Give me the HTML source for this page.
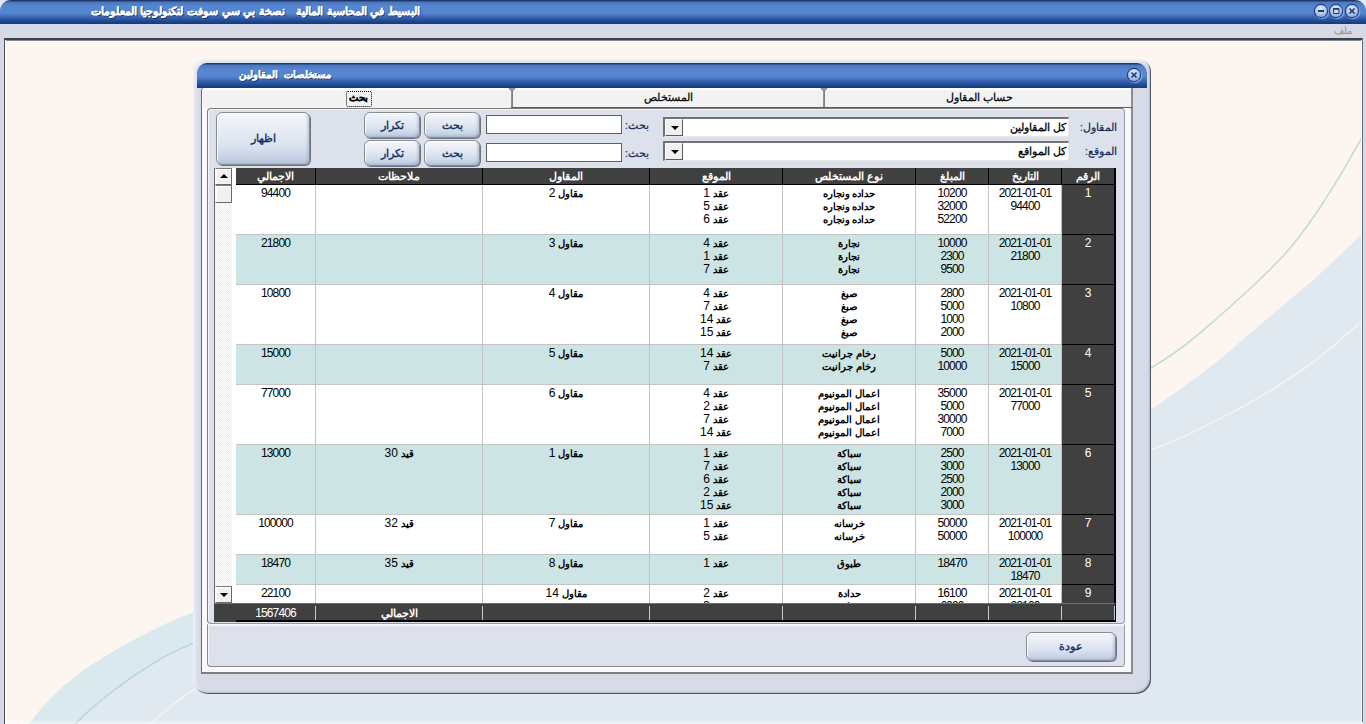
<!DOCTYPE html>
<html lang="ar">
<head>
<meta charset="utf-8">
<title>مستخلصات المقاولين</title>
<style>
*{box-sizing:border-box;margin:0;padding:0}
html,body{width:1366px;height:724px;overflow:hidden}
body{position:relative;background:#fdf6f0;font-family:"Liberation Sans",sans-serif;font-size:11px;color:#000}
#bg{position:absolute;left:0;top:0;width:1366px;height:724px}
/* main window chrome */
#mtitle{position:absolute;left:0;top:0;width:1366px;height:24px;border-radius:11px 11px 0 0;
 background:linear-gradient(#1b2d5e 0,#29457f 1.2px,#4a78be 2px,#4f7ec6 4px,#5686cf 6px,#5585ce 13px,#4a78c2 15px,#3a66b0 17px,#2c57a2 19px,#1f4a92 21px,#173f80 23px,#143a78 24px)}
#mtitle .t{position:absolute;right:946px;top:3px;height:16px;line-height:16px;color:#fff;font-weight:bold;font-size:11px;word-spacing:.6px;-webkit-text-stroke:.3px #fff;white-space:nowrap;direction:rtl;text-shadow:1px 1px 0 #1c2f66}
#menubar{position:absolute;left:0;top:24px;width:1366px;height:14px;background:#d6dae6}
#menubar .m{position:absolute;right:14px;top:0;height:13px;line-height:13px;font-size:10px;color:#9a917f;direction:rtl}
#mline{position:absolute;left:4px;top:38px;width:1358px;height:2px;background:#3c4150}
#mline2{position:absolute;left:5px;top:40px;width:1357px;height:2px;background:linear-gradient(#868a94 0,#868a94 1px,#fff 1px,#fff 2px)}
#lframe{position:absolute;left:0;top:24px;width:4px;height:700px;background:#d4d8e8}
#lline{position:absolute;left:4px;top:38px;width:1px;height:686px;background:#4a4e5a}
#lwhite{position:absolute;left:5px;top:40px;width:1px;height:684px;background:#fff}
#rframe{position:absolute;left:1363px;top:24px;width:3px;height:700px;background:#d4d8e8}
#rline{position:absolute;left:1362px;top:38px;width:1px;height:684px;background:#6a6e7a}
#rwhite{position:absolute;left:1361px;top:40px;width:1px;height:684px;background:#fff}
#bline{position:absolute;left:5px;top:721px;width:1356px;height:3px;background:rgba(255,255,255,.35)}
.wbtn{position:absolute;top:5px;width:12px;height:12px;border-radius:50%;
 background:radial-gradient(circle at 45% 30%,#e2ebf9 0,#b2c7e9 50%,#7494ce 100%);box-shadow:0 0 0 1.2px #1f3b7c,1px 1px 1px 1.2px rgba(190,212,248,.6)}
.wbtn svg{position:absolute;left:-1px;top:-1px;width:14px;height:14px}
/* dialog */
#dlg{position:absolute;left:193px;top:59px;width:958px;height:635px;border-radius:13px 13px 15px 15px;background:#d7dbe8;
 box-shadow:inset 1px 1px 0 #eef0f6,inset -1px -1px 0 #4f5868,inset 3px 3px 3px #e9ebf3,inset -2px -2px 2px #b4b9c8}
#dtitle{position:absolute;left:4px;top:4px;width:950px;height:25px;border-radius:10px 10px 0 0;
 background:linear-gradient(#1b2d5e 0,#29457f 1.2px,#4a78be 2px,#4f7ec6 4px,#5686cf 6px,#5585ce 13.5px,#4a78c2 15.5px,#3a66b0 17.5px,#2c57a2 20px,#1f4a92 22px,#173f80 24px,#143a78 25px)}
#dtitle .t{position:absolute;right:816px;top:3px;height:17px;line-height:17px;color:#fff;font-weight:bold;font-size:10.4px;word-spacing:3px;-webkit-text-stroke:.3px #fff;white-space:nowrap;direction:rtl;text-shadow:1px 1px 0 #1c2f66}
#dtitle .wbtn{top:6px;left:931px}
#tabpage{position:absolute;left:8px;top:29px;width:932px;height:586px;background:#f2f2f2;border-right:2px solid #8c8c8c;border-bottom:2px solid #808080;border-left:1px solid #686868;border-radius:3px 0 0 0;box-shadow:inset 1px 2px 0 #fff}
.tab{position:absolute;top:0;height:19px;line-height:19px;text-align:center;font-size:11px;direction:rtl;white-space:nowrap;-webkit-text-stroke:.25px #000}
.tabsep{position:absolute;top:0;width:2px;height:20px;background:linear-gradient(90deg,#9a9a9a,#787878)}
.tabline{position:absolute;top:19px;height:1px;background:#5a5a5a}
#focus{position:absolute;left:144px;top:3px;width:26px;height:16px;border:1px dotted #000;border-radius:2px}
#spanel{position:absolute;left:5px;top:20px;width:918px;height:516px;background:#dde1eb;border:1px solid #7c7c7c;border-right-color:#9698a4;border-bottom-color:#9698a4;border-radius:4px;box-shadow:inset 1px 1px 0 #f4f5f9,-5px 0 0 #fafafc,6px 0 0 #fafafc}
#spanel2{position:absolute;left:5px;top:536px;width:918px;height:43px;background:#dde1eb;border:1px solid #8a8a8a;border-top-color:#f6f6f8;border-right-color:#9698a4;border-radius:0 0 4px 4px;box-shadow:inset 1px 1px 0 #f4f5f9,-5px 0 0 #fafafc,6px 0 0 #fafafc,0 5px 0 #fafafc,-5px 5px 0 #fafafc,6px 5px 0 #fafafc}
.btn{position:absolute;border:1px solid #868b96;border-radius:6px;text-align:center;color:#15295c;font-size:10.5px;direction:rtl;-webkit-text-stroke:.35px #15295c;
 background:linear-gradient(#f4f7fb 0,#e8edf5 30%,#dae3ef 62%,#c6d3e5 88%,#b6c5db 100%);box-shadow:1px 1px 0 #6d727e,inset 1px 1px 0 #fff,inset -2px -1px 2px rgba(150,170,200,.45)}
.inp{position:absolute;background:#fff;border:1px solid #5f5f5f}
.lbl{position:absolute;color:#15295c;font-size:10.5px;direction:rtl;white-space:nowrap;text-align:right;-webkit-text-stroke:.2px #15295c}
.combo{position:absolute;background:#fff;border-top:2px solid #727272;border-left:2px solid #727272;border-bottom:1px solid #e8e8e8;border-right:1px solid #e8e8e8}
.combo .dd{position:absolute;left:0;top:0;width:18px;height:17px;background:#f0f0f0;border:1px solid;border-color:#fff #5a5a5a #5a5a5a #fff}
.combo .dd:after{content:"";position:absolute;left:5px;top:6px;border:4px solid transparent;border-top:4px solid #000;border-bottom:0}
.combo .v{position:absolute;right:2px;top:0;height:17px;line-height:17px;font-size:10.8px;direction:rtl;white-space:nowrap;-webkit-text-stroke:.3px #000}
/* table */
#tbl{position:absolute;left:214px;top:168px;width:902px;height:435px;background:#fff;overflow:hidden}
.c{position:absolute;text-align:center;line-height:13px;white-space:nowrap;overflow:hidden}
.c.h{background:#404040;color:#fff;font-weight:bold;font-size:10.5px;line-height:16px;border-right:1px solid #000;direction:rtl}
.c.n{background:#404040;color:#fff;border-bottom:1px solid #000;border-right:2px solid #000;padding-top:2px;font-size:12px}
.c.d{border-right:1px solid #c4c4c4;border-bottom:1px solid #c4c4c4;padding-top:2px}
.c.ar{direction:rtl;font-size:9.8px;font-weight:bold;padding-top:2px}
.c.ar b{font-weight:normal;font-size:12px;letter-spacing:-.9px;line-height:0}
.rowbg{position:absolute;left:22px;width:826px;background:#fff}
.rowbg.alt{background:#cce4e4}
#hline{position:absolute;left:22px;top:16px;width:880px;height:1px;background:#000}
#sb{position:absolute;left:0;top:0;width:18px;height:435px;border-left:1px solid #6a6a6a;background:#f7f7f7;background-image:repeating-conic-gradient(#fff 0 25%,#ececec 0 50%);background-size:2px 2px}
.sbb{position:absolute;left:0;width:17px;height:17px;background:#f0f0f0;border:1px solid;border-color:#7a7a7a #6a6a6a #6a6a6a #fff;box-shadow:inset 1px 1px 0 #fff}
.sbb i{position:absolute;left:4px;top:5px;border:4px solid transparent}
.sbb i.up{border-bottom:4px solid #000;border-top:0}
.sbb i.dn{border-top:4px solid #000;border-bottom:0;top:6px}
#totrow{position:absolute;left:214px;top:603px;width:902px;height:19px;background:#404040;border-top:1px solid #6e6e6e;border-right:1px solid #000}
.tc{position:absolute;top:2px;height:15px;line-height:15px;color:#fff;text-align:center;border-right:1px solid #c8c8c8;white-space:nowrap}
.tc.b{font-weight:bold;direction:rtl;font-size:10.5px}
#totline{position:absolute;left:22px;top:16px;width:880px;height:2px;background:#000}
.num{font-size:12px;letter-spacing:-.9px}
.c.d.num{padding-top:2px}
.tabv{position:absolute;top:0;width:0;height:0;border-left:4px solid transparent;border-right:4px solid transparent;border-top:4px solid #8d93ad}
.c.h.hl{border-right:2px solid #000}

</style>
</head>
<body>
<svg id="bg" viewBox="0 0 1366 724">
 <rect width="1366" height="724" fill="#fdf6f0"/>
 <rect width="1366" height="24" fill="#e6e8f0"/>
 <path d="M24.0,731.0 C25.1,729.5 26.8,727.0 30.5,722.3 C34.2,717.6 40.6,709.1 46.3,702.9 C52.0,696.7 58.6,690.7 64.8,685.3 C71.0,679.9 77.1,675.0 83.3,670.5 C89.5,666.0 95.6,662.4 101.8,658.5 C108.0,654.6 114.1,650.9 120.3,647.4 C126.5,643.9 132.6,640.5 138.8,637.2 C145.0,634.0 151.1,630.8 157.3,627.9 C163.5,625.0 170.0,622.1 175.8,619.6 C181.7,617.1 183.4,616.4 192.4,613.1 C201.4,609.8 223.7,602.2 230.0,600.0 L1120,428 C1125.2,424.9 1140.9,415.8 1151.0,409.3 C1161.1,402.8 1169.8,396.7 1180.5,389.0 C1191.2,381.3 1203.5,372.2 1215.0,363.0 C1226.5,353.8 1238.1,343.7 1249.6,334.0 C1261.1,324.3 1272.5,314.4 1284.0,304.6 C1295.5,294.8 1307.2,285.4 1318.7,275.0 C1330.2,264.6 1346.0,249.3 1353.0,242.5 C1360.0,235.7 1358.2,236.9 1361.0,234.0 C1363.8,231.1 1368.5,226.5 1370.0,225.0 L1370,731 L24,731 Z" fill="#e0e9f0"/>
 <path d="M24.0,731.0 C25.1,729.5 26.8,727.0 30.5,722.3 C34.2,717.6 40.6,709.1 46.3,702.9 C52.0,696.7 58.6,690.7 64.8,685.3 C71.0,679.9 77.1,675.0 83.3,670.5 C89.5,666.0 95.6,662.4 101.8,658.5 C108.0,654.6 114.1,650.9 120.3,647.4 C126.5,643.9 132.6,640.5 138.8,637.2 C145.0,634.0 151.1,630.8 157.3,627.9 C163.5,625.0 170.0,622.1 175.8,619.6 C181.7,617.1 183.4,616.4 192.4,613.1 C201.4,609.8 223.7,602.2 230.0,600.0 L230,628 C223.7,630.6 203.0,639.1 192.4,643.7 C181.8,648.3 173.9,651.9 166.5,655.7 C159.1,659.6 154.2,662.9 148.0,666.8 C141.8,670.6 135.7,674.5 129.5,678.8 C123.3,683.1 117.2,687.9 111.0,692.7 C104.8,697.5 98.2,702.6 92.5,707.5 C86.8,712.4 80.5,718.7 76.8,722.3 C73.0,725.9 71.1,727.9 70.0,729.0 Z" fill="#d9e9ee"/>
 <path d="M70.0,729.0 C71.1,727.9 73.0,725.9 76.8,722.3 C80.5,718.7 86.8,712.4 92.5,707.5 C98.2,702.6 104.8,697.5 111.0,692.7 C117.2,687.9 123.3,683.1 129.5,678.8 C135.7,674.5 141.8,670.6 148.0,666.8 C154.2,662.9 159.1,659.6 166.5,655.7 C173.9,651.9 181.8,648.3 192.4,643.7 C203.0,639.1 223.7,630.6 230.0,628.0" fill="none" stroke="#bad3d9" stroke-width="1.4"/>
 <path d="M146.0,727.0 C146.9,726.2 148.3,725.1 151.7,722.3 C155.1,719.5 160.9,714.8 166.5,710.3 C172.1,705.8 180.7,698.8 185.0,695.5 C189.3,692.2 184.9,695.4 192.4,690.8 C199.9,686.2 223.7,671.8 230.0,668.0" fill="none" stroke="#eef5f8" stroke-width="1.6"/>
 <path d="M1120.0,387.0 C1125.2,383.8 1140.9,374.4 1151.0,368.0 C1161.1,361.6 1169.8,356.5 1180.5,348.5 C1191.2,340.5 1203.5,329.9 1215.0,320.0 C1226.5,310.1 1238.5,299.4 1249.6,289.0 C1260.7,278.6 1273.3,266.5 1281.5,257.8 C1289.7,249.1 1292.4,245.6 1299.0,237.0 C1305.6,228.4 1313.7,217.1 1321.0,206.0 C1328.3,194.9 1336.5,181.5 1343.0,170.6 C1349.5,159.7 1356.2,147.6 1360.0,140.8 C1363.8,134.0 1365.0,131.8 1366.0,130.0" fill="none" stroke="#c3dccf" stroke-width="1.6"/>
 <path d="M1120.0,461.0 C1125.2,459.1 1140.9,453.5 1151.0,449.7 C1161.1,445.9 1169.8,442.8 1180.5,438.0 C1191.2,433.2 1203.5,426.8 1215.0,421.0 C1226.5,415.2 1238.1,409.5 1249.6,403.0 C1261.1,396.5 1272.5,389.5 1284.0,382.0 C1295.5,374.5 1307.2,366.9 1318.7,358.0 C1330.2,349.1 1346.0,334.8 1353.0,328.8 C1360.0,322.8 1358.2,324.5 1361.0,322.0 C1363.8,319.5 1368.5,315.3 1370.0,314.0" fill="none" stroke="#eff5f8" stroke-width="1.6"/>
</svg>
<div id="mtitle"><div class="t">البسيط في المحاسبة المالية&nbsp;&nbsp; نصخة بي سي سوفت لتكنولوجيا المعلومات</div>
 <div class="wbtn" style="left:1315px"><svg viewBox="0 0 14 14"><path d="M4 7h6" stroke="#1f3a7a" stroke-width="2"/></svg></div>
 <div class="wbtn" style="left:1330px"><svg viewBox="0 0 14 14"><path d="M4.5 4.5h5.5v5h-5.5z" fill="none" stroke="#1f3a7a" stroke-width="1"/><path d="M4.5 5h5.5" stroke="#1f3a7a" stroke-width="1.6"/></svg></div>
 <div class="wbtn" style="left:1346px"><svg viewBox="0 0 14 14"><path d="M4.5 4.5l5 5M9.5 4.5l-5 5" stroke="#1f3a7a" stroke-width="1.7"/></svg></div>
</div>
<div id="menubar"><div class="m">ملف</div></div>
<div id="lframe"></div><div id="rframe"></div>
<div id="mline"></div><div id="mline2"></div><div id="lline"></div><div id="lwhite"></div><div id="rline"></div><div id="rwhite"></div>
<div id="bline"></div>
<div id="dlg">
 <div id="dtitle"><div class="t">مستخلصات المقاولين</div>
  <div class="wbtn"><svg viewBox="0 0 14 14"><path d="M4.5 4.5l5 5M9.5 4.5l-5 5" stroke="#1f3a7a" stroke-width="1.7"/></svg></div>
 </div>
 <div id="tabpage">
  <div class="tab" style="left:0;width:313px;font-weight:bold;font-size:10px">بحث</div>
  <div id="focus"></div>
  <div class="tab" style="left:311px;width:310px">المستخلص</div>
  <div class="tab" style="left:623px;width:309px">حساب المقاول</div>
  <div class="tabsep" style="left:309px"></div><div class="tabsep" style="left:621px"></div><div class="tabv" style="left:306px"></div><div class="tabv" style="left:618px"></div>
  <div class="tabline" style="left:309px;width:621px"></div>
  <div id="spanel"></div><div id="spanel2"></div>
 </div>
</div>
<div class="btn" style="left:216px;top:112px;width:94px;height:53px;line-height:51px">اظهار</div>
<div class="btn" style="left:364px;top:112px;width:56px;height:26px;line-height:24px">تكرار</div>
<div class="btn" style="left:424px;top:112px;width:56px;height:26px;line-height:24px">بحث</div>
<div class="btn" style="left:364px;top:140px;width:56px;height:26px;line-height:24px">تكرار</div>
<div class="btn" style="left:424px;top:140px;width:56px;height:26px;line-height:24px">بحث</div>
<div class="inp" style="left:486px;top:115px;width:136px;height:19px"></div>
<div class="inp" style="left:486px;top:143px;width:136px;height:19px"></div>
<div class="lbl" style="left:621px;top:118px;width:28px;height:14px;line-height:14px">بحث:</div>
<div class="lbl" style="left:621px;top:146px;width:28px;height:14px;line-height:14px">بحث:</div>
<div class="combo" style="left:663px;top:117px;width:406px;height:20px"><div class="dd"></div><div class="v">كل المقاولين</div></div>
<div class="combo" style="left:663px;top:141px;width:406px;height:20px"><div class="dd"></div><div class="v">كل المواقع</div></div>
<div class="lbl" style="left:1070px;top:120px;width:47px;height:15px;line-height:15px">المقاول:</div>
<div class="lbl" style="left:1070px;top:144px;width:47px;height:15px;line-height:15px">الموقع:</div>
<div id="tbl">
<div class="c h hl" style="left:848px;top:0px;width:54px;height:16px"><span>الرقم</span></div>
<div class="c h" style="left:775px;top:0px;width:73px;height:16px"><span>التاريخ</span></div>
<div class="c h" style="left:702px;top:0px;width:73px;height:16px"><span>المبلغ</span></div>
<div class="c h" style="left:569px;top:0px;width:133px;height:16px"><span>نوع المستخلص</span></div>
<div class="c h" style="left:436px;top:0px;width:133px;height:16px"><span>الموقع</span></div>
<div class="c h" style="left:269px;top:0px;width:167px;height:16px"><span>المقاول</span></div>
<div class="c h" style="left:102px;top:0px;width:167px;height:16px"><span>ملاحظات</span></div>
<div class="c h" style="left:22px;top:0px;width:80px;height:16px"><span>الاجمالي</span></div>
<div class="rowbg" style="top:17px;height:50px"></div>
<div class="c n" style="left:848px;top:17px;width:54px;height:50px">1</div>
<div class="c d num" style="left:775px;top:17px;width:73px;height:50px">2021-01-01<br>94400</div>
<div class="c d num" style="left:702px;top:17px;width:73px;height:50px">10200<br>32000<br>52200</div>
<div class="c d ar" style="left:569px;top:17px;width:133px;height:50px">حداده ونجاره<br>حداده ونجاره<br>حداده ونجاره</div>
<div class="c d ar" style="left:436px;top:17px;width:133px;height:50px">عقد <b>1</b><br>عقد <b>5</b><br>عقد <b>6</b></div>
<div class="c d ar" style="left:269px;top:17px;width:167px;height:50px">مقاول <b>2</b></div>
<div class="c d ar" style="left:102px;top:17px;width:167px;height:50px"></div>
<div class="c d num" style="left:22px;top:17px;width:80px;height:50px">94400</div>
<div class="rowbg alt" style="top:67px;height:50px"></div>
<div class="c n" style="left:848px;top:67px;width:54px;height:50px">2</div>
<div class="c d num" style="left:775px;top:67px;width:73px;height:50px">2021-01-01<br>21800</div>
<div class="c d num" style="left:702px;top:67px;width:73px;height:50px">10000<br>2300<br>9500</div>
<div class="c d ar" style="left:569px;top:67px;width:133px;height:50px">نجارة<br>نجارة<br>نجارة</div>
<div class="c d ar" style="left:436px;top:67px;width:133px;height:50px">عقد <b>4</b><br>عقد <b>1</b><br>عقد <b>7</b></div>
<div class="c d ar" style="left:269px;top:67px;width:167px;height:50px">مقاول <b>3</b></div>
<div class="c d ar" style="left:102px;top:67px;width:167px;height:50px"></div>
<div class="c d num" style="left:22px;top:67px;width:80px;height:50px">21800</div>
<div class="rowbg" style="top:117px;height:60px"></div>
<div class="c n" style="left:848px;top:117px;width:54px;height:60px">3</div>
<div class="c d num" style="left:775px;top:117px;width:73px;height:60px">2021-01-01<br>10800</div>
<div class="c d num" style="left:702px;top:117px;width:73px;height:60px">2800<br>5000<br>1000<br>2000</div>
<div class="c d ar" style="left:569px;top:117px;width:133px;height:60px">صبغ<br>صبغ<br>صبغ<br>صبغ</div>
<div class="c d ar" style="left:436px;top:117px;width:133px;height:60px">عقد <b>4</b><br>عقد <b>7</b><br>عقد <b>14</b><br>عقد <b>15</b></div>
<div class="c d ar" style="left:269px;top:117px;width:167px;height:60px">مقاول <b>4</b></div>
<div class="c d ar" style="left:102px;top:117px;width:167px;height:60px"></div>
<div class="c d num" style="left:22px;top:117px;width:80px;height:60px">10800</div>
<div class="rowbg alt" style="top:177px;height:40px"></div>
<div class="c n" style="left:848px;top:177px;width:54px;height:40px">4</div>
<div class="c d num" style="left:775px;top:177px;width:73px;height:40px">2021-01-01<br>15000</div>
<div class="c d num" style="left:702px;top:177px;width:73px;height:40px">5000<br>10000</div>
<div class="c d ar" style="left:569px;top:177px;width:133px;height:40px">رخام جرانيت<br>رخام جرانيت</div>
<div class="c d ar" style="left:436px;top:177px;width:133px;height:40px">عقد <b>14</b><br>عقد <b>7</b></div>
<div class="c d ar" style="left:269px;top:177px;width:167px;height:40px">مقاول <b>5</b></div>
<div class="c d ar" style="left:102px;top:177px;width:167px;height:40px"></div>
<div class="c d num" style="left:22px;top:177px;width:80px;height:40px">15000</div>
<div class="rowbg" style="top:217px;height:60px"></div>
<div class="c n" style="left:848px;top:217px;width:54px;height:60px">5</div>
<div class="c d num" style="left:775px;top:217px;width:73px;height:60px">2021-01-01<br>77000</div>
<div class="c d num" style="left:702px;top:217px;width:73px;height:60px">35000<br>5000<br>30000<br>7000</div>
<div class="c d ar" style="left:569px;top:217px;width:133px;height:60px">اعمال المونيوم<br>اعمال المونيوم<br>اعمال المونيوم<br>اعمال المونيوم</div>
<div class="c d ar" style="left:436px;top:217px;width:133px;height:60px">عقد <b>4</b><br>عقد <b>2</b><br>عقد <b>7</b><br>عقد <b>14</b></div>
<div class="c d ar" style="left:269px;top:217px;width:167px;height:60px">مقاول <b>6</b></div>
<div class="c d ar" style="left:102px;top:217px;width:167px;height:60px"></div>
<div class="c d num" style="left:22px;top:217px;width:80px;height:60px">77000</div>
<div class="rowbg alt" style="top:277px;height:70px"></div>
<div class="c n" style="left:848px;top:277px;width:54px;height:70px">6</div>
<div class="c d num" style="left:775px;top:277px;width:73px;height:70px">2021-01-01<br>13000</div>
<div class="c d num" style="left:702px;top:277px;width:73px;height:70px">2500<br>3000<br>2500<br>2000<br>3000</div>
<div class="c d ar" style="left:569px;top:277px;width:133px;height:70px">سباكة<br>سباكة<br>سباكة<br>سباكة<br>سباكة</div>
<div class="c d ar" style="left:436px;top:277px;width:133px;height:70px">عقد <b>1</b><br>عقد <b>7</b><br>عقد <b>6</b><br>عقد <b>2</b><br>عقد <b>15</b></div>
<div class="c d ar" style="left:269px;top:277px;width:167px;height:70px">مقاول <b>1</b></div>
<div class="c d ar" style="left:102px;top:277px;width:167px;height:70px">قيد <b>30</b></div>
<div class="c d num" style="left:22px;top:277px;width:80px;height:70px">13000</div>
<div class="rowbg" style="top:347px;height:40px"></div>
<div class="c n" style="left:848px;top:347px;width:54px;height:40px">7</div>
<div class="c d num" style="left:775px;top:347px;width:73px;height:40px">2021-01-01<br>100000</div>
<div class="c d num" style="left:702px;top:347px;width:73px;height:40px">50000<br>50000</div>
<div class="c d ar" style="left:569px;top:347px;width:133px;height:40px">خرسانه<br>خرسانه</div>
<div class="c d ar" style="left:436px;top:347px;width:133px;height:40px">عقد <b>1</b><br>عقد <b>5</b></div>
<div class="c d ar" style="left:269px;top:347px;width:167px;height:40px">مقاول <b>7</b></div>
<div class="c d ar" style="left:102px;top:347px;width:167px;height:40px">قيد <b>32</b></div>
<div class="c d num" style="left:22px;top:347px;width:80px;height:40px">100000</div>
<div class="rowbg alt" style="top:387px;height:30px"></div>
<div class="c n" style="left:848px;top:387px;width:54px;height:30px">8</div>
<div class="c d num" style="left:775px;top:387px;width:73px;height:30px">2021-01-01<br>18470</div>
<div class="c d num" style="left:702px;top:387px;width:73px;height:30px">18470</div>
<div class="c d ar" style="left:569px;top:387px;width:133px;height:30px">طبوق</div>
<div class="c d ar" style="left:436px;top:387px;width:133px;height:30px">عقد <b>1</b></div>
<div class="c d ar" style="left:269px;top:387px;width:167px;height:30px">مقاول <b>8</b></div>
<div class="c d ar" style="left:102px;top:387px;width:167px;height:30px">قيد <b>35</b></div>
<div class="c d num" style="left:22px;top:387px;width:80px;height:30px">18470</div>
<div class="rowbg" style="top:417px;height:30px"></div>
<div class="c n" style="left:848px;top:417px;width:54px;height:30px">9</div>
<div class="c d num" style="left:775px;top:417px;width:73px;height:30px">2021-01-01<br>22100</div>
<div class="c d num" style="left:702px;top:417px;width:73px;height:30px">16100<br>6000</div>
<div class="c d ar" style="left:569px;top:417px;width:133px;height:30px">حدادة<br>حدادة</div>
<div class="c d ar" style="left:436px;top:417px;width:133px;height:30px">عقد <b>2</b><br>عقد <b>3</b></div>
<div class="c d ar" style="left:269px;top:417px;width:167px;height:30px">مقاول <b>14</b></div>
<div class="c d ar" style="left:102px;top:417px;width:167px;height:30px"></div>
<div class="c d num" style="left:22px;top:417px;width:80px;height:30px">22100</div>
<div id="hline"></div>
<div id="sb">
 <div class="sbb" style="top:0"><i class="up"></i></div>
 <div class="sbb" style="top:17px;height:18px"></div>
 <div class="sbb" style="top:418px"><i class="dn"></i></div>
</div>
</div>
<div id="totrow">
 <div class="tc num" style="left:22px;width:80px">1567406</div>
 <div class="tc b" style="left:102px;width:167px">الاجمالي</div>
 <div class="tc" style="left:269px;width:167px"></div>
 <div class="tc" style="left:436px;width:133px"></div>
 <div class="tc" style="left:569px;width:133px"></div>
 <div class="tc" style="left:702px;width:73px"></div>
 <div class="tc" style="left:775px;width:73px"></div>
 <div class="tc" style="left:848px;width:53px"></div>
 <div id="totline"></div>
</div>
<div class="btn" style="left:1026px;top:632px;width:90px;height:29px;line-height:27px">عودة</div>

</body>
</html>
